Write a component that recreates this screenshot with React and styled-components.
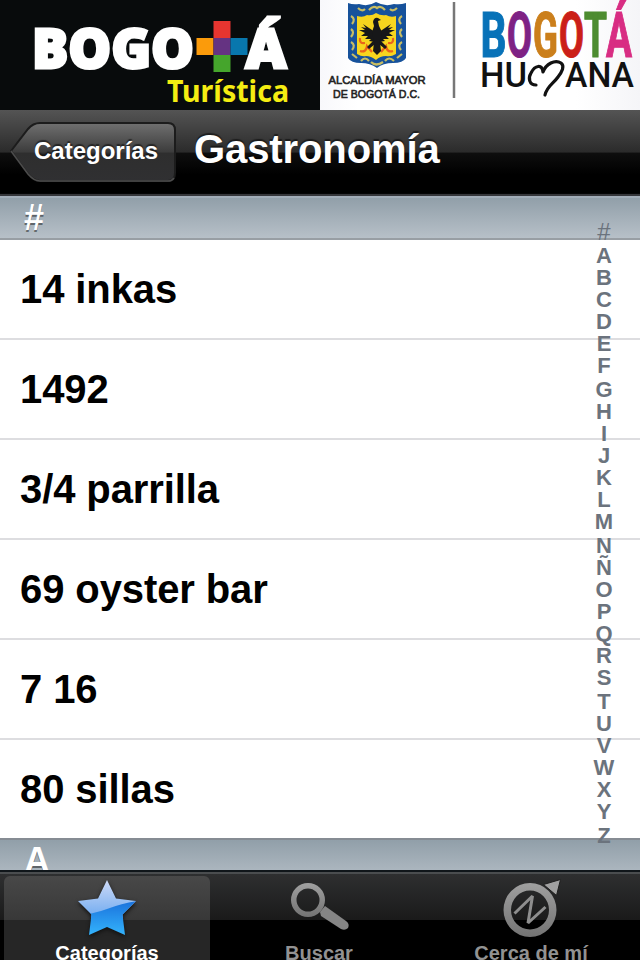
import React from "react";
import styled, { createGlobalStyle } from "styled-components";

const places = [
  "14 inkas",
  "1492",
  "3/4 parrilla",
  "69 oyster bar",
  "7 16",
  "80 sillas",
];

const letters = "#ABCDEFGHIJKLMNÑOPQRSTUVWXYZ".split("");

const humanaLetters = [
  { char: "B", x: 480.5, width: 26, color: "#0872b8" },
  { char: "O", x: 507, width: 25, color: "#7e2284" },
  { char: "G", x: 533, width: 25, color: "#cb7f1b" },
  { char: "O", x: 559, width: 25, color: "#cb1f18" },
  { char: "T", x: 584, width: 23, color: "#4d8c30" },
  { char: "Á", x: 606, width: 26, color: "#d82d83" },
];

const TouristLogo = () => (
  <svg width="320" height="110" viewBox="0 0 320 110">
    <g fill="#fff" stroke="#fff" strokeWidth="2.800">
      <LogoText x="32" y="67.500" fontSize="55" textLength="162">
        BOGO
      </LogoText>
      <LogoText x="245.500" y="67.500" fontSize="55" textLength="41">
        Á
      </LogoText>
    </g>
    <path fill="#e73530" d="M213.500 21h17v17h-17z" />
    <path fill="#fb9b0b" d="M196.500 38h17v17h-17z" />
    <path fill="#653382" d="M213.500 38h17v17h-17z" />
    <path fill="#0877ad" d="M230.500 38h17v17h-17z" />
    <path fill="#45a52c" d="M213.500 55h17v17h-17z" />
    <TuristicaText x="167" y="102" textLength="122">
      Turística
    </TuristicaText>
  </svg>
);

const Shield = () => (
  <g>
    <path
      fill="#17529b"
      d="M348 3q5 2 11 1 9 3 17-2 9 5 18 2 6 1 12-1v55q-3 5-13 5-10 0-16 5-7-5-16-5-10 0-13-5z"
    />
    <path
      fill="#f7d51e"
      d="M357 16q6 2 10-1 5 1 9-2 5 3 10 2 5 3 10 1v38q-5 3-10 2-6 0-10 4-5-4-10-4-4 1-9-2z"
    />
    <g fill="none" stroke="#c8bd62" strokeWidth="2.200">
      <path d="M358 8q4 4 7 1M397 8q-4 4-7 1M369 10q4-5 8-2 4-3 8 2M351 16q5 3 1 8M351 29q4 3 0 8M351 42q5 3 1 8M352 54l5 4M402 16q-5 3-1 8M402 29q-4 3 0 8M402 42q-5 3-1 8M402 54l-5 4M361 61q4-5 8 0M385 61q4-5 9 0M371 62q5 5 12 0" />
    </g>
    <g fill="none" stroke="#e9641b" strokeWidth="2.200">
      <path d="M360 38q-1 6 5 5M360 51q6 2 7-5l5 6M393 38q1 6-5 5M393 51q-6 2-7-5l-5 6" />
    </g>
    {/* eagle: wings, then head and body, then tail */}
    <g fill="#171719">
      <path d="M363 24L375 32V42L369 41 371 39 365 39 368 36 361 36 365 33 359 30 365 30 361 27 366 28z" />
      <path d="M391 24L379 32V42L385 41 383 39 389 39 386 36 393 36 389 33 395 30 389 30 393 27 388 28z" />
      <path d="M373 22q1-5 5-4l3 2-3 1 1 5 3 6-2 10 1 9-4 4-4-4 1-9-2-10 2-6z" />
      <path d="M374 40L367 47 369 49 375 44zM380 40L387 47 385 49 379 44z" />
    </g>
  </g>
);

const CityLogo = () => (
  <svg width="320" height="110" viewBox="320 0 320 110">
    <Shield />
    <MayorText x="328.500" y="84" textLength="97">
      ALCALDÍA MAYOR
    </MayorText>
    <MayorText x="333" y="98" textLength="87">
      DE BOGOTÁ D.C.
    </MayorText>
    <path stroke="#777" strokeWidth="2.500" d="M454 2v96" />
    {humanaLetters.map((item, i) => (
      <HumanaText
        key={i}
        x={item.x}
        y="57"
        fill={item.color}
        stroke={item.color}
        textLength={item.width}
        lengthAdjust="spacingAndGlyphs"
      >
        {item.char}
      </HumanaText>
    ))}
    <ThinText x="480" y="86.500" textLength="47">
      HU
    </ThinText>
    <ThinText x="565" y="86.500" textLength="69">
      ANA
    </ThinText>
    <path
      fill="none"
      stroke="#111"
      strokeWidth="3.200"
      strokeLinecap="round"
      strokeLinejoin="round"
      d="M536 85c-7 0-8-7-5-12 4-8 11-9 12-1 3-8 12-13 18-9 4 3 1 9-3 14-5 7-11 9-13 18"
    />
  </svg>
);

const StarIcon = () => (
  <StarSvg width="62" height="60" viewBox="0 0 62 60">
    <defs>
      <linearGradient id="starTop" x1="0" y1="0" x2="0" y2="1">
        <stop offset="0" stopColor="#d2dcf7" />
        <stop offset="1" stopColor="#6eaaf0" />
      </linearGradient>
      <linearGradient id="starBottom" x1="0" y1="0" x2="0" y2="1">
        <stop offset="0" stopColor="#1a72dc" />
        <stop offset="1" stopColor="#36b9ff" />
      </linearGradient>
      <clipPath id="starShape">
        <path d="M31 2L40 20.500 60 23 46.500 36.500 49 57 31 49 13 57 15.500 36.500 2 23 22 20.500Z" />
      </clipPath>
    </defs>
    <g clipPath="url(#starShape)">
      <path fill="url(#starTop)" d="M0 0h62v40H0z" />
      <path fill="url(#starBottom)" d="M0 37Q15 37 31 31T62 23V60H0z" />
    </g>
  </StarSvg>
);

const GreyGradient = ({ id }) => (
  <linearGradient id={id} x1="0" y1="0" x2="0" y2="1">
    <stop offset="0" stopColor="#a0a0a0" />
    <stop offset="1" stopColor="#737373" />
  </linearGradient>
);

const SearchIcon = () => (
  <svg width="62" height="60" viewBox="288 878 62 60">
    <defs>
      <GreyGradient id="glass" />
    </defs>
    <path
      fill="url(#glass)"
      fillRule="evenodd"
      d="M308 883a17 17 0 1 0 0 34 17 17 0 0 0 0-34zm0 5.500a11.500 11.500 0 1 1 0 23 11.500 11.500 0 0 1 0-23z"
    />
    <path
      fill="#858585"
      d="M320 912l5-6 21 15q4 3 2 7-3 3-7 1L321 916z"
    />
  </svg>
);

const CompassIcon = () => (
  <svg width="62" height="60" viewBox="500 878 62 60">
    <defs>
      <GreyGradient id="ring" />
    </defs>
    <path
      fill="url(#ring)"
      fillRule="evenodd"
      d="M530 883a26.500 27 0 1 0 0 54 26.500 27 0 0 0 0-54zm0 7.500a19 19.500 0 1 1 0 39 19 19.500 0 0 1 0-39z"
    />
    <path
      fill="#a0a0a0"
      stroke="#1e1e1e"
      strokeWidth="1"
      d="M560.500 879.500l-4 16-13-11z"
    />
    <path
      fill="none"
      stroke="#8e8e8e"
      strokeWidth="3"
      strokeLinejoin="bevel"
      d="M514.500 913.500L532.500 896 528 923 545.500 907"
    />
  </svg>
);

const App = () => {
  return (
    <Screen>
      <GlobalStyle />
      <Header>
        <TouristSide>
          <TouristLogo />
        </TouristSide>
        <CitySide>
          <CityLogo />
        </CitySide>
      </Header>
      <NavBar>
        <BackButton>
          <BackShape width="168" height="62" viewBox="0 0 168 62">
            <defs>
              <linearGradient id="back" x1="0" y1="0" x2="0" y2="1">
                <stop offset="0" stopColor="#707070" />
                <stop offset="0.5" stopColor="#3c3c3c" />
                <stop offset="0.52" stopColor="#2e2e2e" />
                <stop offset="1" stopColor="#303032" />
              </linearGradient>
            </defs>
            <path
              fill="url(#back)"
              stroke="#1c1c1c"
              strokeWidth="2"
              d="M1 29L18 7Q23 1 30 1H158Q165 1 165 8V51Q165 59 158 59H30Q24 59 18 52Z"
            />
            <path
              fill="none"
              stroke="#4c4c4c"
              strokeWidth="1.500"
              d="M1 29L18 52Q24 59 30 59H158Q162 59 164 56"
            />
          </BackShape>
          <span>Categorías</span>
        </BackButton>
        <Title>Gastronomía</Title>
      </NavBar>
      <Content>
        <SectionHeader $first>#</SectionHeader>
        <List>
          {places.map((place) => (
            <Row key={place}>{place}</Row>
          ))}
        </List>
        <SectionHeader>A</SectionHeader>
        <Index>
          {letters.map((letter) => (
            <IndexLetter key={letter}>{letter}</IndexLetter>
          ))}
        </Index>
      </Content>
      <TabBar>
        <Tab $active>
          <StarIcon />
          <TabLabel>Categorías</TabLabel>
        </Tab>
        <Tab>
          <SearchIcon />
          <TabLabel>Buscar</TabLabel>
        </Tab>
        <Tab>
          <CompassIcon />
          <TabLabel>Cerca de mí</TabLabel>
        </Tab>
      </TabBar>
    </Screen>
  );
};

const GlobalStyle = createGlobalStyle`
  * {
    box-sizing: border-box;
  }
  body {
    margin: 0;
    overflow: hidden;
  }
  svg {
    display: block;
    flex: none;
  }
`;

const Screen = styled.div`
  width: 640px;
  height: 960px;
  display: flex;
  flex-direction: column;
  overflow: hidden;
  background: #fff;
  font-family: "Liberation Sans", Arial, sans-serif;
  font-weight: 700;
`;

const Header = styled.header`
  display: flex;
  flex: 0 0 110px;
`;

const TouristSide = styled.div`
  width: 320px;
  background: #080b0c;
`;

const CitySide = styled.div`
  width: 320px;
  background: linear-gradient(90deg, #f8f8fb, #fff 12%, #fff 80%, #f5f5f8);
`;

const LogoText = styled.text.attrs({ lengthAdjust: "spacingAndGlyphs" })`
  font-family: "Open Sans", sans-serif;
  font-weight: 800;
`;

const TuristicaText = styled.text.attrs({ lengthAdjust: "spacingAndGlyphs" })`
  font-family: "Noto Sans", sans-serif;
  font-weight: 700;
  font-size: 31px;
  fill: #f5ed12;
`;

const MayorText = styled.text.attrs({ lengthAdjust: "spacingAndGlyphs" })`
  font-weight: 400;
  font-size: 11.5px;
  fill: #222;
  stroke: #222;
  stroke-width: 0.6;
`;

const HumanaText = styled.text`
  font-family: Roboto, sans-serif;
  font-weight: 700;
  font-size: 63px;
  stroke-width: 1.2;
`;

const ThinText = styled.text.attrs({ lengthAdjust: "spacingAndGlyphs" })`
  font-family: Roboto, sans-serif;
  font-weight: 500;
  font-size: 35px;
  fill: #111;
`;

const NavBar = styled.nav`
  display: flex;
  flex: 0 0 86px;
  align-items: flex-start;
  padding: 12px 0 0 10px;
  color: #fff;
  background: linear-gradient(
    #545454,
    #2b2b2b 49%,
    #0e0e0e 50%,
    #000 75%,
    #000 97%,
    #35363a 98%
  );
`;

const BackButton = styled.button`
  position: relative;
  width: 168px;
  height: 62px;
  padding: 0 0 4px 24px;
  border: 0;
  background: none;
  color: #fff;
  font: inherit;
  font-size: 24px;
  text-align: left;
  text-shadow: 0 -2px 1px rgba(0, 0, 0, 0.5);

  & span {
    position: relative;
  }
`;

const BackShape = styled.svg`
  position: absolute;
  inset: 0;
`;

const Title = styled.h1`
  margin: 4px 0 0 16px;
  font-size: 40px;
  letter-spacing: -0.1px;
  line-height: 46px;
  text-shadow: 0 -2px 1px rgba(0, 0, 0, 0.5);
`;

const Content = styled.main`
  position: relative;
  flex: 0 0 674px;
  overflow: hidden;
`;

const SectionHeader = styled.h2`
  height: ${(props) => (props.$first ? "44px" : "46px")};
  margin: 0;
  padding: ${(props) => (props.$first ? "0" : "1px")} 0 0 24px;
  border-top: 2px solid ${(props) => (props.$first ? "#a2adb8" : "#868c93")};
  border-bottom: 2px solid #989ea4;
  background: linear-gradient(#919fa9, #b7c0c8);
  color: #fff;
  font-size: 36px;
  line-height: 40px;
  text-shadow: 0 2px 0 rgba(0, 0, 0, 0.44);

  &:last-of-type {
    border-bottom: 0;
  }
`;

const List = styled.ul`
  margin: 0;
  padding: 0;
  list-style: none;
`;

const Row = styled.li`
  height: 100px;
  padding-left: 20px;
  border-bottom: 2px solid #dddde0;
  color: #000;
  font-size: 40px;
  letter-spacing: -0.1px;
  line-height: 98px;

  &:last-child {
    height: 98px;
    border: 0;
  }
`;

const Index = styled.div`
  position: absolute;
  top: 25px;
  right: 20px;
  width: 32px;
  display: flex;
  flex-direction: column;
  align-items: center;
`;

const IndexLetter = styled.span`
  height: 22px;
  color: #6b737d;
  font-size: 22px;
  line-height: 22px;

  &:first-child {
    font-size: 24px;
    font-weight: 400;
  }
  &:nth-child(2),
  &:nth-child(8),
  &:nth-child(15),
  &:nth-child(22),
  &:nth-child(28) {
    margin-top: 2px;
  }
`;

const TabBar = styled.footer`
  display: flex;
  flex: 0 0 90px;
  gap: 6px;
  padding: 0 6px 0 4px;
  overflow: hidden;
  border-top: 2px solid #10161a;
  background: linear-gradient(
    #4a4d4f 0,
    #4a4d4f 2px,
    #2e2f30 2px,
    #1a1a1a 48px,
    #000 48px
  );
`;

const Tab = styled.div`
  display: flex;
  flex: 1;
  flex-direction: column;
  align-items: center;
  height: 100px;
  margin-top: 4px;
  padding-top: 2px;
  border-radius: 6px;
  color: ${(props) => (props.$active ? "#fff" : "#929292")};
  background: ${(props) =>
    props.$active
      ? "linear-gradient(#484848, #383838 44px, #262626 44px, #262626)"
      : "none"};
`;

const StarSvg = styled.svg`
  filter: drop-shadow(0 2px 2px #111);
`;

const TabLabel = styled.span`
  margin-top: 3px;
  font-size: 20px;
  line-height: 24px;
  white-space: nowrap;
`;

export default App;
